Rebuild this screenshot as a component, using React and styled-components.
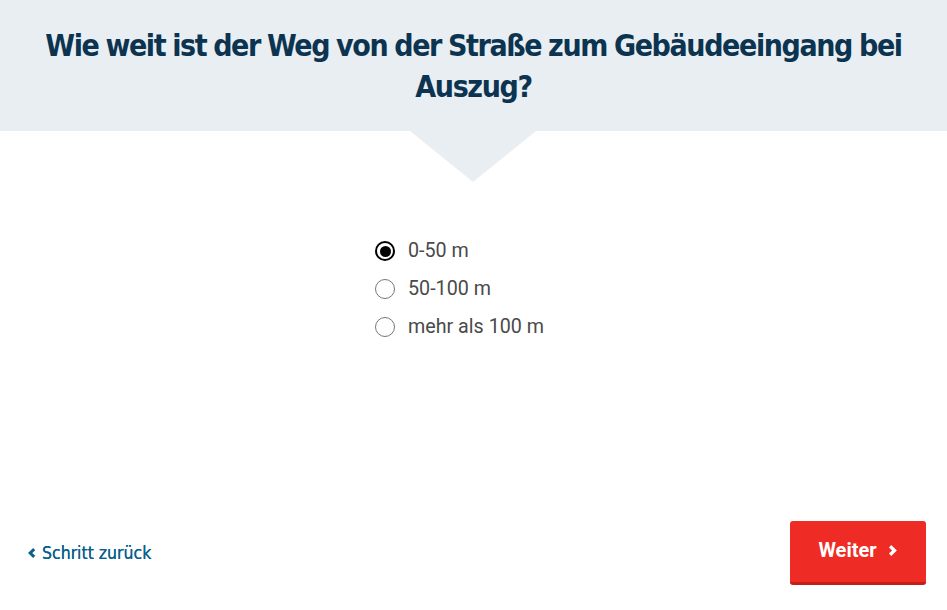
import styled, { createGlobalStyle } from 'styled-components';
import { useState } from 'react';

const GlobalStyle = createGlobalStyle`
  html, body {
    margin: 0;
    padding: 0;
    background: #fff;
  }
  body {
    font-family: Roboto, "Liberation Sans", sans-serif;
  }
`;

const Page = styled.div`
  width: 947px;
  height: 610px;
  display: flex;
  flex-direction: column;
  overflow: hidden;
`;

const Header = styled.header`
  position: relative;
  background: #e9eef3;
  height: 131px;
  display: flex;
  align-items: center;
  justify-content: center;
  padding: 0 20px;
  box-sizing: border-box;
  &::after {
    content: '';
    position: absolute;
    left: 410px;
    top: 131px;
    border-left: 63px solid transparent;
    border-right: 63px solid transparent;
    border-top: 51px solid #e9eef3;
  }
`;

const Title = styled.h1`
  margin: 0;
  font-family: "DejaVu Sans Condensed", "Liberation Sans Narrow", sans-serif;
  font-weight: 700;
  font-size: 30px;
  line-height: 41px;
  letter-spacing: -1.4px;
  word-spacing: -1px;
  color: #0c3450;
  text-align: center;
`;

const Options = styled.div`
  display: flex;
  flex-direction: column;
  gap: 14px;
  padding: 108px 0 0 375px;
  flex: 1;
`;

const Option = styled.label`
  display: flex;
  align-items: center;
  gap: 13px;
  font-size: 19.7px;
  line-height: 24px;
  color: #4a4a4a;
  cursor: pointer;
`;

const Radio = styled.span`
  width: 20px;
  height: 20px;
  border-radius: 50%;
  box-sizing: border-box;
  border: ${p => (p.$checked ? '2px solid #000' : '1px solid #777')};
  display: flex;
  align-items: center;
  justify-content: center;
  &::after {
    content: '';
    display: ${p => (p.$checked ? 'block' : 'none')};
    width: 11px;
    height: 11px;
    border-radius: 50%;
    background: #000;
  }
`;

const Footer = styled.footer`
  display: flex;
  align-items: center;
  justify-content: space-between;
  padding: 0 21px 25px 27px;
`;

const BackLink = styled.a`
  display: flex;
  align-items: center;
  gap: 5px;
  font-family: "DejaVu Sans Condensed", "Liberation Sans Narrow", sans-serif;
  font-size: 17.5px;
  color: #0a5f8c;
  text-decoration: none;
  cursor: pointer;
  text-shadow: 0 0 0.4px #0a5f8c;
`;

const NextButton = styled.button`
  width: 136px;
  height: 64px;
  background: #ee2b24;
  border: none;
  border-bottom: 3px solid #c71d17;
  border-radius: 3px;
  color: #fff;
  font-family: Roboto, "Liberation Sans", sans-serif;
  font-weight: 700;
  font-size: 20px;
  display: flex;
  align-items: center;
  justify-content: center;
  gap: 10px;
  padding: 0 0 3px;
  cursor: pointer;
`;

const Chevron = ({ dir = 'right', size = 10, color = 'currentColor' }) => (
  <svg width={size} height={size} viewBox="0 0 10 10">
    <path
      d={dir === 'right' ? 'M2.8 1.2 L6.8 5 L2.8 8.8' : 'M7.2 1.2 L3.2 5 L7.2 8.8'}
      fill="none"
      stroke={color}
      strokeWidth="3"
    />
  </svg>
);

const choices = ['0-50 m', '50-100 m', 'mehr als 100 m'];

export default function App() {
  const [value, setValue] = useState(0);
  return (
    <Page>
      <GlobalStyle />
      <Header>
        <Title>Wie weit ist der Weg von der Straße zum Gebäudeeingang bei Auszug?</Title>
      </Header>
      <Options>
        {choices.map((c, i) => (
          <Option key={c} onClick={() => setValue(i)}>
            <Radio $checked={value === i} />
            {c}
          </Option>
        ))}
      </Options>
      <Footer>
        <BackLink>
          <Chevron dir="left" size={10} />
          Schritt zurück
        </BackLink>
        <NextButton>
          Weiter
          <Chevron size={11} />
        </NextButton>
      </Footer>
    </Page>
  );
}
